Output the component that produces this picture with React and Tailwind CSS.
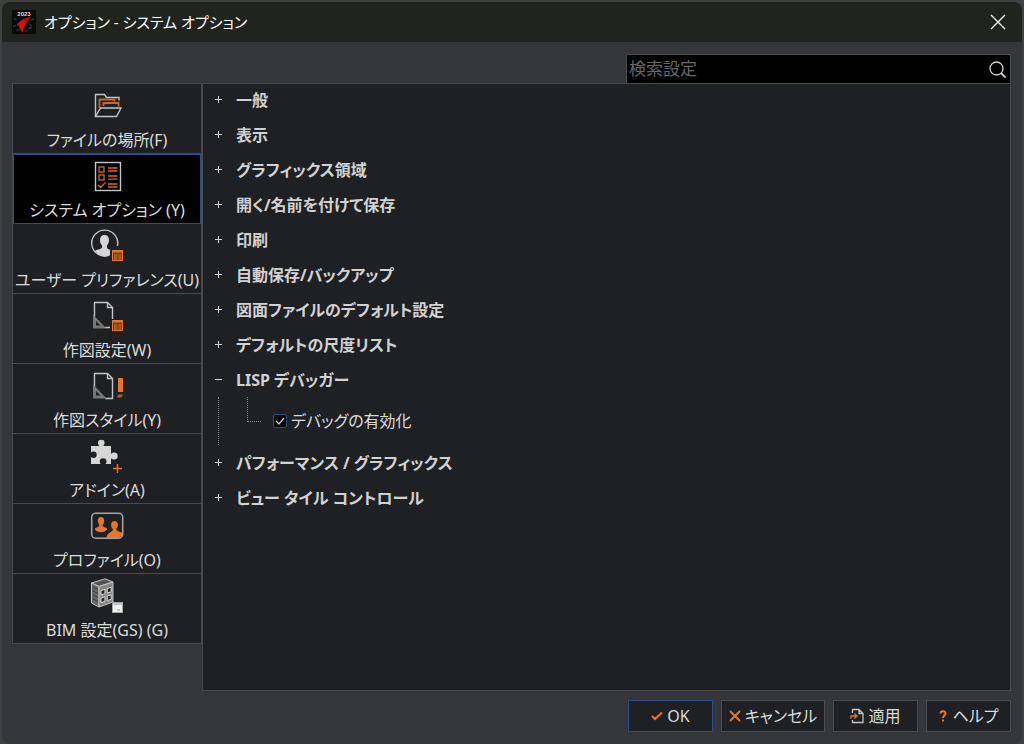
import { useState } from 'react'

const GRAY = '#c4c4c4'
const ORANGE = '#e8762a'

function FolderIcon() {
  return (
    <svg width="36" height="36" viewBox="0 0 36 36" fill="none" strokeWidth="1.4">
      <path d="M6.500 28.500V6.500h9l2 3h12.500v3" stroke={GRAY} />
      <path d="M10.500 20v-8.500h15v2M14.500 18v-3h15v3.500" stroke="#c96a25" strokeWidth="1.800" />
      <path d="M6.500 28.500l5-8.500h20.500l-4.500 8.500z" stroke={GRAY} />
    </svg>
  )
}

function ChecklistIcon() {
  return (
    <svg width="36" height="36" viewBox="0 0 36 36" fill="none">
      <rect x="6.500" y="4.500" width="25" height="28" stroke={GRAY} strokeWidth="1.400" />
      <rect x="10" y="9" width="5" height="5" stroke="#d06c27" strokeWidth="1.300" />
      <rect x="10" y="17" width="5" height="5" stroke="#d06c27" strokeWidth="1.300" />
      <path d="M9 27l2.500 2.500 5-5M19 10h9.500M19 13h9.500M19 18h9.500M19 21.200h9.500M19 26h9.500M19 29h9.500" stroke="#d06c27" strokeWidth="1.300" />
    </svg>
  )
}

function TableBadge() {
  return (
    <g>
      <rect x="23.500" y="22.500" width="10" height="10" fill="#6b3a18" stroke={ORANGE} />
      <path d="M24 23.500h9" stroke={ORANGE} strokeWidth="2" />
      <path d="M25 27h3.500M29.500 27h3M25 29h3.500M29.500 29h3M25 31h3.500M29.500 31h3" stroke={ORANGE} />
    </g>
  )
}

function UserIcon() {
  return (
    <svg width="36" height="36" viewBox="0 0 36 36" fill="none">
      <path d="M28.400 18A13 13 0 1 0 20.500 27.200" stroke={GRAY} strokeWidth="1.400" />
      <path d="M15.500 7c3 0 4.500 2 4.500 5 0 2.500-.8 4-2 5.500v2c0 1.200 1 1.500 3 2.200V27c-5.500 2.500-11 1-15-4 1-1 3-1.400 5-2 1.500-.5 2-1 2-2v-1.500c-1.200-1.500-2-3-2-5.500 0-3 1.500-5 4.500-5z" fill="#d6d6d6" />
      <TableBadge />
    </svg>
  )
}

function SheetShape({ full }) {
  return (
    <g>
      <path
        d={full ? 'M5.500 20V5.500h13l5 5V30.500H16' : 'M5.500 20V4.500h13l5 5V21M16 29.500h5'}
        stroke={GRAY}
        strokeWidth="1.400"
      />
      <path d={full ? 'M18.500 5.500v5h5' : 'M18.500 4.500v5h5'} stroke={GRAY} strokeWidth="1.400" />
      <path fillRule="evenodd" d="M4 16.500L17.500 30.500H4zM7 23v4.500h4.500z" fill="#777" />
    </g>
  )
}

function DraftingIcon() {
  return (
    <svg width="36" height="36" viewBox="0 0 36 36" fill="none">
      <SheetShape />
      <TableBadge />
    </svg>
  )
}

function StyleIcon() {
  return (
    <svg width="36" height="36" viewBox="0 0 36 36" fill="none">
      <SheetShape full />
      <rect x="29" y="10" width="5" height="14" fill={ORANGE} />
      <path d="M29.500 26.500H34l-1.500 3h-5z" fill="#a85c25" />
    </svg>
  )
}

function PuzzleIcon() {
  return (
    <svg width="36" height="36" viewBox="0 0 36 36" fill="none">
      <path
        d="M2 8h8.500c-1.200-1.200-1.500-2.200-1.500-3a3.300 3.300 0 0 1 6.600 0c0 .8-.4 1.800-1.600 3H22v8c1-1 2-1.400 3.200-1.400a3.500 3.500 0 0 1 0 7c-1.200 0-2.200-.4-3.200-1.400V26h-5.500c.8-.8 1-1.600 1-2.400a3.400 3.400 0 0 0-6.800 0c0 .8.300 1.600 1 2.400H2v-7c.8.700 1.600 1 2.400 1a3.300 3.300 0 0 0 0-6.600c-.8 0-1.600.3-2.400 1z"
        fill="#d6d6d6"
      />
      <path d="M28.500 26v9M24 30.500h9" stroke={ORANGE} strokeWidth="1.400" />
    </svg>
  )
}

function ProfileIcon() {
  return (
    <svg width="36" height="36" viewBox="0 0 36 36" fill="none">
      <path d="M12 9c2 0 3.200 1.500 3.200 3.800 0 1.800-.7 3-1.500 3.900v1.500l4 2c.5.400.5 1.300 0 1.900-3 3-8.400 3-11.400 0-.5-.6-.5-1.500 0-1.900l4-2v-1.500c-.8-.9-1.500-2.100-1.500-3.900C8.800 10.500 10 9 12 9z" fill={ORANGE} />
      <path d="M25.500 13c2.200 0 3.400 1.500 3.400 3.900 0 1.700-.8 3-1.600 3.800v1.600l5.700 2.500v2.700l-2.500 2.200H17.300c.5-2.500 1.700-4 3.400-5l3-2.200v-1.800c-.8-.8-1.600-2.100-1.600-3.800 0-2.400 1.200-3.900 3.400-3.900z" fill={ORANGE} />
      <rect x="2.700" y="5.200" width="31" height="25" rx="4" stroke="#a5a5a5" strokeWidth="1.500" />
    </svg>
  )
}

function BuildingIcon() {
  return (
    <svg width="36" height="36" viewBox="0 0 36 36" fill="none">
      <path d="M2.500 5L16 .8l8 3.200L10 8.500z" fill="#555" stroke={GRAY} />
      <path d="M2.500 5L10 8.500V29l-7.500-4z" fill="#666" stroke={GRAY} />
      <path d="M10 8.500L24 4v20L10 29z" fill="#858585" stroke={GRAY} />
      <path d="M4 9l5 2.500M4 13l5 2.500M4 17l5 2.500M4 21l5 2.500" stroke="#3c3c3c" />
      <path d="M12 12.500l4-1.200v4.500l-4 1.300zM18.200 10.500l4-1.200v4.500l-4 1.300zM12 20l4-1.200v4.500l-4 1.300zM18.200 18l4-1.200v4.500l-4 1.300z" fill="#222" stroke="#ddd" />
      <rect x="23.500" y="24.500" width="10" height="10" fill="#f0f0f0" stroke="#a8a8a8" />
      <path d="M24 26h9M28 32h3" stroke="#999" strokeWidth="1.200" />
    </svg>
  )
}

const tabs = [
  { label: 'ファイルの場所(F)', Icon: FolderIcon },
  { label: 'システム オプション (Y)', Icon: ChecklistIcon },
  { label: 'ユーザー プリファレンス(U)', Icon: UserIcon },
  { label: '作図設定(W)', Icon: DraftingIcon },
  { label: '作図スタイル(Y)', Icon: StyleIcon },
  { label: 'アドイン(A)', Icon: PuzzleIcon },
  { label: 'プロファイル(O)', Icon: ProfileIcon },
  { label: 'BIM 設定(GS) (G)', Icon: BuildingIcon },
]

const sections = [
  '一般',
  '表示',
  'グラフィックス領域',
  '開く/名前を付けて保存',
  '印刷',
  '自動保存/バックアップ',
  '図面ファイルのデフォルト設定',
  'デフォルトの尺度リスト',
  'LISP デバッガー',
  'パフォーマンス / グラフィックス',
  'ビュー タイル コントロール',
]

function Toggle({ open }) {
  return (
    <svg width="7" height="7" viewBox="0 0 7 7" stroke="#d4d4d4">
      <path d={open ? 'M0 3.500h7' : 'M0 3.500h7M3.500 0v7'} />
    </svg>
  )
}

function TitleBar() {
  return (
    <header className="h-10 shrink-0 flex items-center justify-between bg-[#21231f] pl-2.5 pr-4">
      <div className="flex items-center gap-2">
        <svg width="24" height="24" viewBox="0 0 24 24">
          <rect width="24" height="24" fill="#090909" />
          <path d="M2 8l2 2M1 17l3-2M5 21l2-2M17 14l3 2M16 19l4-2M19 10l3-1M13 22l3-2" stroke="#343434" strokeWidth="1.500" />
          <text x="12" y="6" textAnchor="middle" fontSize="6" fontWeight="700" fill="#d8d8d8" fontFamily="Liberation Sans, sans-serif">2023</text>
          <path d="M19 7C12 8 7 11 5 15l2 1 1 3 3 4c0-4 1-7 3-10z" fill="#e00a0a" />
          <path d="M19 7l-5 6-2-3z" fill="#8d160b" />
        </svg>
        <h1 className="text-[15px] leading-6 text-white">オプション - システム オプション</h1>
      </div>
      <button aria-label="閉じる" className="p-0">
        <svg width="16" height="16" viewBox="0 0 16 16" stroke="#f2f2f2" strokeWidth="1.400">
          <path d="M1 1l14 14M15 1L1 15" />
        </svg>
      </button>
    </header>
  )
}

function Sidebar({ active, onSelect }) {
  return (
    <nav className="w-[190px] shrink-0 border-t border-x border-[#4a4b4c]">
      {tabs.map(({ label, Icon }, i) => (
        <button
          key={label}
          onClick={() => onSelect(i)}
          className={
            i === active
              ? 'w-full h-[70px] flex flex-col items-center gap-1 pt-1 bg-black outline outline-1 outline-[#2b4c86] -outline-offset-1'
              : 'w-full h-[70px] flex flex-col items-center gap-1 pt-1 bg-[#1f2023] border-b border-[#4a4b4c]'
          }
        >
          <Icon />
          <span className="text-base leading-6 whitespace-nowrap">{label}</span>
        </button>
      ))}
    </nav>
  )
}

function OptionTree() {
  const [open, setOpen] = useState([8])
  const [debug, setDebug] = useState(true)

  const toggle = (i) => {
    setOpen(open.includes(i) ? open.filter((n) => n !== i) : [...open, i])
  }

  return (
    <main className="flex-1 bg-[#1f2023] border border-[#4a4b4c] pl-3">
      <ul className="-mt-0.5">
        {sections.map((name, i) => (
          <li key={name}>
            <button onClick={() => toggle(i)} className="h-[35px] flex items-center gap-3.5 text-base font-bold text-[#d2d2d2]">
              <Toggle open={open.includes(i)} />
              <span>{name}</span>
            </button>
            {i === 8 && open.includes(8) && (
              <div className="h-12 flex">
                <div className="w-8 ml-[3px] border-l border-dotted border-[#8a8a8a]"></div>
                <div className="w-3.5 h-[25px] -ml-[3px] border-l border-b border-dotted border-[#8a8a8a]"></div>
                <label className="h-12 ml-3 flex items-center gap-1 text-base">
                  <span className="grid place-items-center">
                    <input
                      type="checkbox"
                      checked={debug}
                      onChange={() => setDebug(!debug)}
                      className="col-start-1 row-start-1 appearance-none w-3.5 h-3.5 rounded-xs bg-black border border-[#2b4c86]"
                    />
                    {debug && (
                      <svg width="10" height="10" viewBox="0 0 10 10" fill="none" stroke="#d0d0d0" strokeWidth="1.200" className="col-start-1 row-start-1 pointer-events-none">
                        <path d="M1 5l3 3 5-6" />
                      </svg>
                    )}
                  </span>
                  デバッグの有効化
                </label>
              </div>
            )}
          </li>
        ))}
      </ul>
    </main>
  )
}

function Footer() {
  return (
    <footer className="flex justify-end gap-2 pt-[9px] pr-[11px] pb-3 text-base">
      <button className="w-[85px] h-8 flex items-center justify-center gap-1 bg-[#1f2023] border border-[#2b4c86]">
        <svg width="12" height="12" viewBox="0 0 12 12" fill="none" stroke={ORANGE} strokeWidth="2">
          <path d="M1 6l3 3 7-6.500" />
        </svg>
        OK
      </button>
      <button className="w-[104px] h-8 flex items-center justify-center gap-1 bg-[#1f2023] border border-[#4a4b4c]">
        <svg width="12" height="12" viewBox="0 0 12 12" stroke={ORANGE} strokeWidth="2">
          <path d="M1 1l10 10M11 1L1 11" />
        </svg>
        キャンセル
      </button>
      <button className="w-[85px] h-8 flex items-center justify-center gap-1 bg-[#1f2023] border border-[#4a4b4c]">
        <svg width="14" height="16" viewBox="0 0 14 16" fill="none" strokeWidth="1.300">
          <path d="M2.500 5V1.500h6.500l4 4v9H2.500V12M9 1.500v4h4" stroke={GRAY} />
          <path d="M1 10.500V8h6M4.500 5.500L7 8l-2.500 2.500" stroke={ORANGE} />
        </svg>
        適用
      </button>
      <button className="w-[85px] h-8 flex items-center justify-center gap-1.5 bg-[#1f2023] border border-[#4a4b4c]">
        <svg width="8" height="12" viewBox="0 0 8 12" fill="none" stroke={ORANGE} strokeWidth="2">
          <path d="M1.500 3.500C1.500 .5 6.500 .5 6.500 3.500 6.500 5.500 4 5.500 4 8M4 9.500v2" />
        </svg>
        ヘルプ
      </button>
    </footer>
  )
}

export default function App() {
  const [active, setActive] = useState(1)

  return (
    <div className="min-h-screen flex flex-col bg-[#404143] pt-0.5 px-0.5 font-['Noto_Sans','Noto_Sans_CJK_JP',sans-serif] [font-feature-settings:'palt'] text-[#dcdcdc]">
      <div className="flex-1 flex flex-col rounded-lg overflow-hidden bg-[#35363a]">
        <TitleBar />
        <div className="flex justify-end pt-3 pr-[11px]">
          <label className="w-[385px] h-[29px] flex items-center bg-black border border-[#4a4b4c] border-b-0 pl-0.5 pr-1">
            <input
              type="text"
              aria-label="検索設定"
              placeholder="検索設定"
              className="flex-1 min-w-0 bg-transparent text-[17px] outline-none placeholder:text-[#66676b]"
            />
            <svg width="17" height="17" viewBox="0 0 17 17" fill="none" stroke="#d4d4d4" strokeWidth="1.300">
              <circle cx="7.500" cy="7.500" r="6.500" />
              <path d="M12 12l4.500 4.500" strokeWidth="1.800" />
            </svg>
          </label>
        </div>
        <div className="flex-1 flex items-start pl-2.5 pr-[11px]">
          <Sidebar active={active} onSelect={setActive} />
          <div className="flex-1 self-stretch flex">
            <OptionTree />
          </div>
        </div>
        <Footer />
      </div>
    </div>
  )
}
